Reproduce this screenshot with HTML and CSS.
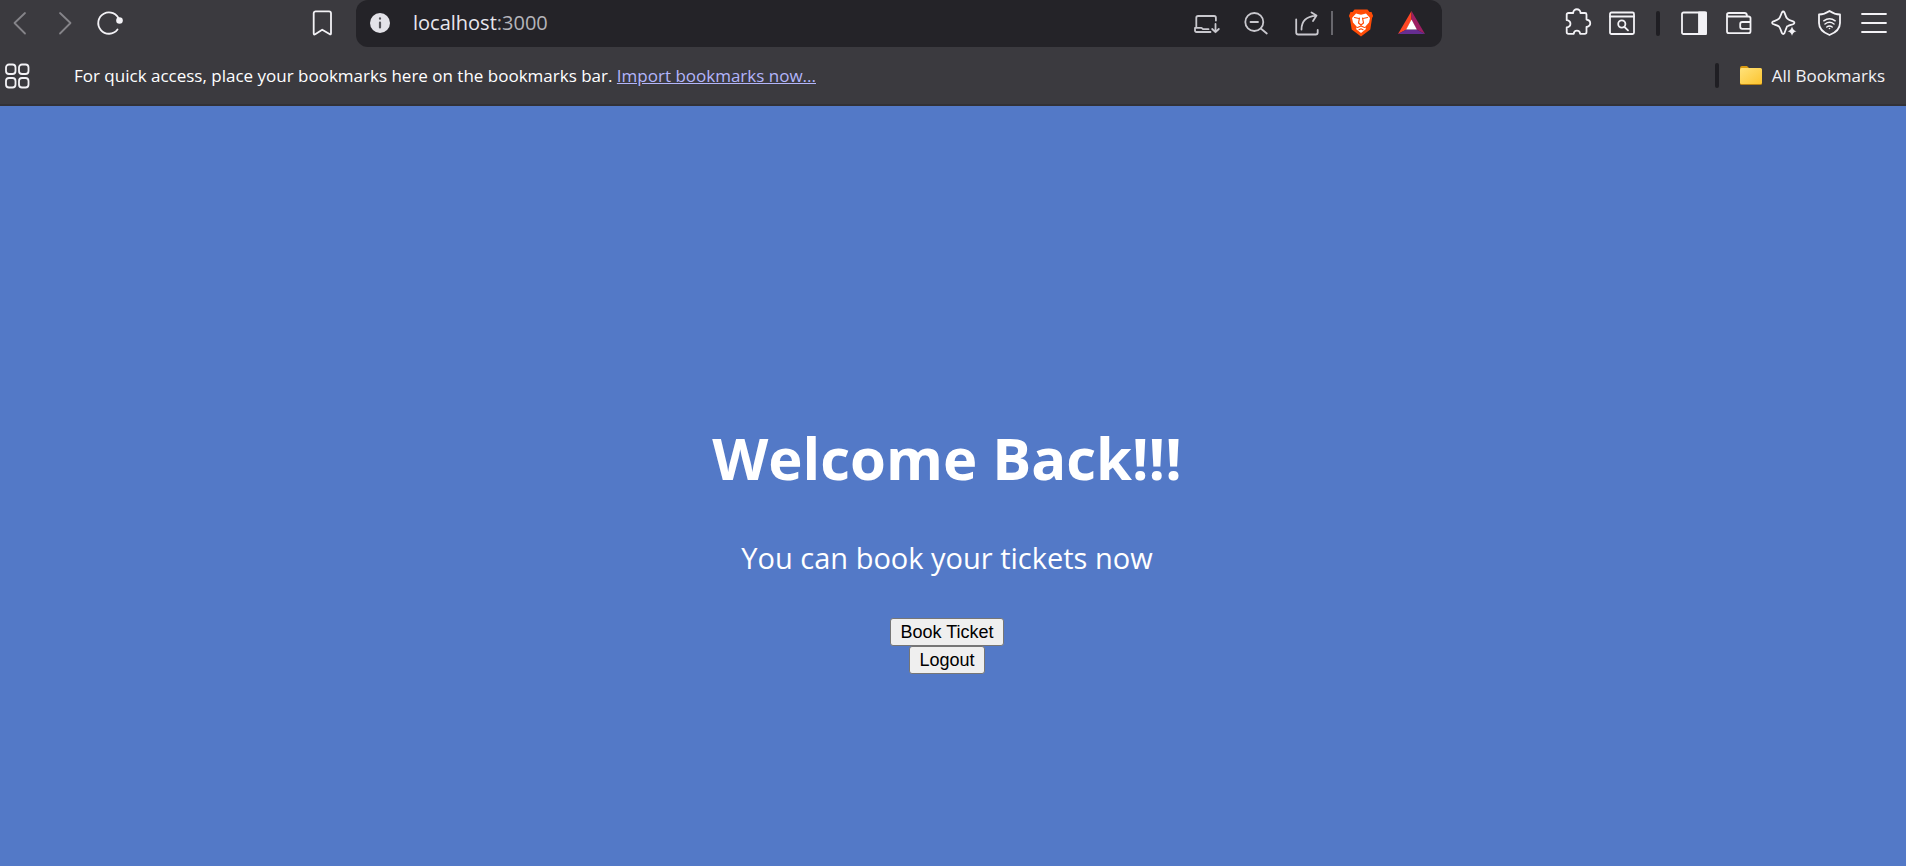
FILE: index.html
```html
<!DOCTYPE html>
<html lang="en">
<head>
<meta charset="utf-8">
<title>localhost:3000</title>
<link rel="stylesheet" href="styles.css">
</head>
<body>
<header class="browser">
  <div class="toolbar">
    <nav class="nav" aria-label="Navigation">
      <button class="icon-btn dim" aria-label="Back"><svg class="icon" viewBox="0 0 30 30"><path d="M20 5 9.500 15 20 25.500"/></svg></button>
      <button class="icon-btn dim" aria-label="Forward"><svg class="icon" viewBox="0 0 30 30"><path d="M10 5 20.500 15 10 25.500"/></svg></button>
      <button class="icon-btn" aria-label="Reload"><svg class="icon" viewBox="0 0 30 30"><path d="M24.200 12A10.700 10.700 0 1 0 22.500 21.500"/><circle class="fill" stroke="none" cx="24.500" cy="12.500" r="3.300"/></svg></button>
    </nav>
    <button class="icon-btn save" aria-label="Bookmark this tab"><svg class="icon" viewBox="0 0 30 30"><path d="M8.500 3.300h13.500a2 2 0 0 1 2 2v20q0 1.800-1.500.8L15.200 21.700 8.200 26.200q-1.500.9-1.500-.9v-20a2 2 0 0 1 2-2z"/></svg></button>
    <div class="omnibox">
      <button class="icon-btn" aria-label="Site information"><svg class="icon" viewBox="0 0 30 30"><circle cx="15" cy="15" r="10" fill="#e3e2e8" stroke="none"/><path d="M15 14.500v5M15 10.300v.4" stroke="#56555b" stroke-width="2.200"/></svg></button>
      <div class="url" role="textbox" aria-label="Address">localhost<span class="port">:3000</span></div>
      <div class="omni-actions">
        <button class="icon-btn soft" aria-label="Install app"><svg class="icon" viewBox="0 0 30 30"><path d="M5.300 19.500V9.800a1.800 1.800 0 0 1 1.800-1.800h16a1.800 1.800 0 0 1 1.800 1.800V12.500M19.500 24H5.500q-1.500 0-1.500-1.500V19.800h6.500l1.500 1.400h5.500M24.500 16v8M21.200 21l3.300 3.200 3.300-3.200"/></svg></button>
        <button class="icon-btn soft" aria-label="Zoom out"><svg class="icon" viewBox="0 0 30 30"><circle cx="13.300" cy="14" r="9"/><path d="M9.500 14h7.500M19.800 20.500l6 5"/></svg></button>
        <button class="icon-btn soft" aria-label="Share"><svg class="icon" viewBox="0 0 30 30"><path d="M5.200 11.500v13q0 2 2 2h17.500q2 0 2-2v-2.500M10.500 21.500c0-8 4.500-13 14.500-13.800M20.500 4.500l5 3-3.500 5.500"/></svg></button>
        <span class="thin-rule"></span>
        <button class="icon-btn" aria-label="Brave Shields"><svg class="icon" viewBox="0 0 30 30"><path d="M8.500 1.500h13l2 2.500h2l1.600 4-1 2-1.800 11.500L15 28.500 5.700 21.500 3.900 10l-1-2 1.600-4h2z" fill="#ff4c06" stroke="none"/><path d="M10 5.500l5 1.300 5-1.300 4 4.500-1 4.500-4 4.500 1 2-5 4-5-4 1-2-4-4.500-1-4.500z" fill="#fff" stroke="none"/><path d="M8.500 9.500l4.500 1M21.500 9.500l-4.500 1M13.500 10l-1 5 2.500 2 2.500-2-1-5M11.500 19.500 15 18l3.500 1.500M13 21.800l2-1 2 1" stroke="#ff4c06" stroke-width="1.200"/></svg></button>
        <button class="icon-btn" aria-label="Brave Rewards"><svg class="icon" viewBox="0 0 30 30"><g stroke="none"><path d="M15.500 3v9L10.500 21.500 2 26z" fill="#ff4724"/><path d="M15.500 3v9l5 9.500 8.500 4.500z" fill="#9e1f63"/><path d="M2 26 10.500 21.500h10l8.500 4.500z" fill="#662d91"/><path d="M15.500 11.500 20.800 21.500H10.200z" fill="#fff"/></g></svg></button>
      </div>
    </div>
    <div class="tools">
      <button class="icon-btn" aria-label="Extensions"><svg class="icon" viewBox="0 0 30 30"><path d="M6.500 5h4.700c0-5 7.300-5 7.300 0h4.500q1.500 0 1.500 1.500v5c5 1 5 6.500 0 7.500v5q0 1.800-1.800 1.800h-4.500c-.5-4.300-6-4.300-6.500 0H6.500q-1.800 0-1.800-1.800v-4.500c5-.8 5-6.500 0-7.300V6.500Q4.700 5 6.500 5z"/></svg></button>
      <button class="icon-btn" aria-label="Search tabs"><svg class="icon" viewBox="0 0 30 30"><rect x="3" y="4.500" width="24" height="21.500" rx="1.500"/><path d="M3 8.500h24M17.500 19l3.500 3.300"/><circle cx="14.800" cy="16" r="3.600"/></svg></button>
      <span class="thick-rule"></span>
      <button class="icon-btn" aria-label="Sidebar"><svg class="icon" viewBox="0 0 30 30"><rect x="3" y="4.500" width="24" height="21.500" rx="1.500"/><path class="fill" d="M20 4.500h7V26h-7z"/></svg></button>
      <button class="icon-btn" aria-label="Wallet"><svg class="icon" viewBox="0 0 30 30"><path d="M3 7.500v15.700q0 2 2 2h19.500q2 0 2-2V10q0-1.500-2-1.500H4.500Q3 8.500 3 6.800 3 5 5 5h15.500q2.500 0 2.500 3.300M26.500 14H18.200q-2 0-2 2v2.800q0 2 2 2h8.300"/></svg></button>
      <button class="icon-btn" aria-label="Leo AI"><svg class="icon" viewBox="0 0 30 30"><path d="M18 18.500c-1 2.500-2 5-2.500 6.500q-1.300 2-2.600 0c-.8-2.200-1.700-5.200-2.900-6.500-1.300-1-4.200-1.800-6-2.500q-1.800-1.300 0-2.500c1.800-.7 4.700-1.500 6-2.800 1.200-1.200 2-4.200 2.900-6.200q1.300-2 2.600 0c.7 2 1.500 5 2.800 6.200 1.300 1.300 4 2.100 6.200 2.800q1.800 1.300 0 2.500c-1.800.7-3.800 1.200-5.200 1.800"/><path class="fill" stroke="none" d="M23 18.500q1 4 4.500 4.700-3.500.8-4.500 4.500-1-3.700-4.500-4.500 3.500-.7 4.500-4.700z"/></svg></button>
      <button class="icon-btn" aria-label="VPN"><svg class="icon" viewBox="0 0 30 30"><path d="M15.500 3q5 3.500 10.500 3.500v8.500q0 8-10.500 12Q5 23 5 15V6.500Q10.500 6.500 15.500 3z"/><path d="M9.800 12.800q5.700-4.300 11.400 0M11 16q4.500-3.300 9 0M12.800 19q2.700-2 5.400 0" stroke-width="1.500"/><circle class="fill" cx="15.500" cy="20.500" r="0.800" stroke="none"/></svg></button>
      <button class="icon-btn" aria-label="Menu"><svg class="icon" viewBox="0 0 30 30"><path d="M3 6h24M3 15h24M3 24h24"/></svg></button>
    </div>
  </div>
  <div class="bookmarks">
    <button class="icon-btn" aria-label="Apps"><svg class="icon" viewBox="0 0 30 30"><rect x="4" y="3.500" width="9.500" height="9.500" rx="3"/><rect x="17" y="3.500" width="9.500" height="9.500" rx="3"/><rect x="4" y="17" width="9.500" height="9.500" rx="3"/><rect x="17" y="17" width="9.500" height="9.500" rx="3"/></svg></button>
    <p class="hint">For quick access, place your bookmarks here on the bookmarks bar. <a class="import" href="#">Import bookmarks now...</a></p>
    <span class="thick-rule"></span>
    <button class="all"><svg class="folder" viewBox="0 0 24 22"><defs><linearGradient id="f" x1="0" y1="0" x2="1" y2="1"><stop offset="0" stop-color="#ffe27a"/><stop offset="1" stop-color="#fcc42f"/></linearGradient></defs><path d="M1 8V3q0-2 2-2h5l2 2h4v5z" fill="#d99a12"/><rect x="1" y="3.500" width="22" height="16.500" rx="1.500" fill="#b98213"/><rect x="1" y="3" width="22" height="16" rx="1.500" fill="url(#f)"/></svg>All Bookmarks</button>
  </div>
</header>
<main class="page">
  <h1 class="title">Welcome Back!!!</h1>
  <p class="lead">You can book your tickets now</p>
  <button class="action">Book Ticket</button>
  <button class="action">Logout</button>
</main>
</body>
</html>
```

FILE: styles.css
```css
* { box-sizing: border-box; }

body {
  margin: 0;
  min-height: 100vh;
  display: flex;
  flex-direction: column;
  background: #5379c7;
  color: #fff;
  font-family: "Open Sans", "Noto Sans", sans-serif;
}

.browser {
  background: #3b3a3f;
  border-bottom: 2px solid #323136;
}

.toolbar {
  display: flex;
  align-items: flex-start;
  padding: 0 17px 0 5px;
}

.nav, .tools {
  display: flex;
  align-items: center;
  gap: 15px;
  height: 46px;
}

.tools { margin-left: 120px; }

.icon-btn {
  display: flex;
  align-items: center;
  justify-content: center;
  flex: none;
  width: 30px;
  height: 46px;
  padding: 0;
  border: 0;
  background: none;
  color: #f3f2f6;
}

.dim { color: #858489; }
.soft { color: #c9c8ce; }
.save { margin: 0 19px 0 182px; }

.icon {
  width: 30px;
  height: 30px;
  fill: none;
  stroke: currentColor;
  stroke-width: 1.8;
  stroke-linecap: round;
  stroke-linejoin: round;
}

.fill { fill: currentColor; }

.omnibox {
  display: flex;
  flex: 1;
  height: 47px;
  padding: 0 16px 0 9px;
  border-radius: 12px;
  background: #242328;
}

.url {
  flex: 1;
  margin-left: 18px;
  color: #e8e7ed;
  font-size: 20px;
  line-height: 46px;
}

.port { color: #b5b4ba; }

.omni-actions {
  display: flex;
  align-items: center;
  gap: 20px;
  height: 46px;
}

.thin-rule {
  width: 2px;
  height: 24px;
  margin: 0 -7px 0 -10px;
  background: #68676d;
}

.thick-rule {
  flex: none;
  width: 4px;
  height: 25px;
  margin: 0 4px;
  border-radius: 2px;
  background: #1f1e23;
}

.bookmarks {
  display: flex;
  align-items: center;
  height: 57px;
  padding: 0 21px 0 2px;
}

.hint {
  flex: 1;
  margin: 0 0 0 42px;
  font-size: 17px;
  line-height: 24px;
}

.import { color: #b3b5fb; }

.all {
  display: flex;
  align-items: center;
  gap: 9px;
  margin-left: 16px;
  padding: 0;
  border: 0;
  background: none;
  color: #f3f2f6;
  font-family: inherit;
  font-size: 17px;
  line-height: 24px;
}

.folder {
  width: 24px;
  height: 22px;
}

.page {
  flex: 1;
  display: flex;
  flex-direction: column;
  align-items: center;
  justify-content: center;
  padding: 80px 12px 0 0;
}

.title {
  margin: 40px 0;
  font-size: 58px;
  line-height: 80px;
}

.lead {
  margin: 0 0 40px;
  font-size: 29px;
  line-height: 40px;
}

.action {
  padding: 2px 9px;
  border: 1px solid #767676;
  border-radius: 3px;
  background: #efefef;
  color: #000;
  font-family: "Liberation Sans", Arial, sans-serif;
  font-size: 18px;
  line-height: 22px;
}
```
